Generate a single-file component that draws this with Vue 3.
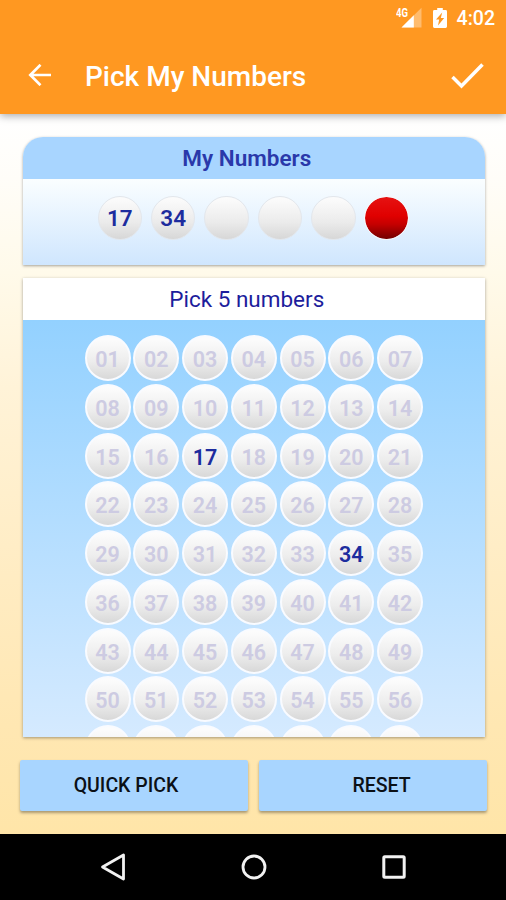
<script setup>
const picked = [17, 34]
const slots = ['17', '34', '', '', '']
const numbers = Array.from({ length: 56 }, (_, i) => i + 1)
const label = (n) => String(n).padStart(2, '0')
</script>

<template>
  <div class="screen">
    <header class="top">
      <div class="status">
        <svg class="signal" width="27" height="22" viewBox="0 0 27 22">
          <text x="0" y="10" class="net" textLength="12" lengthAdjust="spacingAndGlyphs">4G</text>
          <path d="M25.5 .8V20.500H5.5z" fill="#fff" opacity=".35" />
          <path d="M17.8 8.300V20.500H5.5z" fill="#fff" />
        </svg>
        <svg class="battery" width="14" height="20" viewBox="0 0 14 20">
          <path fill="#fff" d="M4.2 0h5.6v2H12.600q1.400 0 1.400 1.400V18.600q0 1.400-1.400 1.400H1.400Q0 20 0 18.600V3.400Q0 2 1.400 2H4.200z" />
          <path fill="#ff9821" d="M9.200 4.500L3 11.600H6.200L5 17.500L11.200 10H7.800z" />
        </svg>
        <span class="clock">4:02</span>
      </div>
      <div class="bar">
        <svg class="back" width="24" height="22" viewBox="0 0 24 22" fill="none" stroke="#fff" stroke-width="2.700">
          <path d="M23 11H2M12.500 .8L2.300 11L12.500 21.200" />
        </svg>
        <h1>Pick My Numbers</h1>
        <svg class="check" width="33" height="26" viewBox="0 0 33 26" fill="none" stroke="#fff" stroke-width="3.500">
          <path d="M1.500 14L10.500 23L31.500 1.500" />
        </svg>
      </div>
    </header>

    <main>
      <section class="card mine">
        <h2>My Numbers</h2>
        <div class="slots">
          <span v-for="(s, i) in slots" :key="i" class="slot">{{ s }}</span>
          <span class="slot red"></span>
        </div>
      </section>

      <section class="card picker">
        <h3>Pick 5 numbers</h3>
        <div class="field">
          <div class="grid">
            <span v-for="n in numbers" :key="n" class="ball" :class="{ on: picked.includes(n) }">{{ label(n) }}</span>
            <span v-for="n in 7" :key="'next' + n" class="ball"></span>
          </div>
        </div>
      </section>

      <div class="actions">
        <button class="quick">QUICK PICK</button>
        <button class="reset">RESET</button>
      </div>
    </main>

    <nav>
      <svg width="26" height="28" viewBox="0 0 26 28" fill="none" stroke="#f2f2f2" stroke-width="2.800" stroke-linejoin="round">
        <path d="M23.500 2V26L2.500 14z" />
      </svg>
      <svg width="26" height="26" viewBox="0 0 26 26" fill="none" stroke="#f2f2f2" stroke-width="2.800">
        <circle cx="13" cy="13" r="11" />
      </svg>
      <svg width="26" height="26" viewBox="0 0 26 26" fill="none" stroke="#f2f2f2" stroke-width="3" stroke-linejoin="round">
        <rect x="2.800" y="2.800" width="20.400" height="20.400" rx="1" />
      </svg>
    </nav>
  </div>
</template>

<style>
body {
  margin: 0;
  overflow: hidden;
}
</style>

<style scoped>
.screen {
  width: 506px;
  height: 900px;
  display: flex;
  flex-direction: column;
  overflow: hidden;
  font-family: Roboto, "Liberation Sans", sans-serif;
  background: #000;
}
.top {
  height: 114px;
  flex: none;
  background: #ff9821;
  color: #fff;
  box-shadow: 0 2px 8px rgba(0, 0, 0, 0.34);
  z-index: 1;
}
.status {
  height: 38px;
  display: flex;
  align-items: center;
  justify-content: flex-end;
  padding-right: 11px;
  box-sizing: border-box;
}
.net {
  font-size: 12px;
  font-weight: 700;
  fill: #fff;
}
.signal {
  margin-top: -3px;
}
.battery {
  margin: -2px 10px 0 10px;
}
.clock {
  font-size: 19.5px;
  font-weight: 500;
  line-height: 40px;
}
.bar {
  height: 76px;
  display: flex;
  align-items: center;
  padding: 0 22px 0 28px;
}
.back {
  margin-top: -2px;
}
h1 {
  margin: 2px 0 0 33px;
  flex: 1;
  font-size: 28px;
  font-weight: 500;
  line-height: 76px;
}
.check {
  margin-top: 0;
}
main {
  height: 719.500px;
  flex: none;
  box-sizing: border-box;
  padding: 23px 18px 0 20px;
  background: linear-gradient(#fff 0%, #fffdf8 9%, #fffaea 22%, #fff3d8 38%, #ffedc6 60%, #ffe7b2 85%, #ffe5a8 100%);
}
.card {
  margin: 0 3.500px 0 3px;
  box-shadow: 0 1px 3px rgba(0, 0, 0, 0.36);
}
.mine {
  height: 127.500px;
  border-radius: 20px 20px 0 0;
  overflow: hidden;
}
h2,
h3 {
  margin: 0;
  text-align: center;
}
h2 {
  height: 41.500px;
  line-height: 43px;
  font-size: 22.500px;
  font-weight: 600;
  padding-right: 14px;
  background: #a8d5ff;
  color: #2a38aa;
}
.slots {
  height: 86px;
  box-sizing: border-box;
  padding: 17px 0 0 74.500px;
  display: flex;
  gap: 8.900px;
  background: linear-gradient(#fafeff, #cfe6fe);
}
.slot {
  width: 44.500px;
  height: 44.500px;
  box-sizing: border-box;
  border-radius: 50%;
  border: 1px solid #e3e7ec;
  background: linear-gradient(#fbfbfb 5%, #ebebeb 60%, #d7d7d7 100%);
  color: #1d2c9e;
  font-size: 22.500px;
  font-weight: 600;
  line-height: 43px;
  text-align: center;
}
.slot.red {
  border: 1.500px solid #f7f8fb;
  background: linear-gradient(#e61212, #e00000 45%, #c50000 65%, #730000 100%);
  background-clip: padding-box;
}
.picker {
  margin-top: 13.500px;
  height: 459px;
}
h3 {
  height: 42px;
  line-height: 43px;
  font-size: 22.500px;
  font-weight: 400;
  padding-right: 14px;
  background: #fff;
  color: #1d1d9c;
}
.field {
  height: 417px;
  overflow: hidden;
  background: linear-gradient(#93d1ff, #d5eaff);
}
.grid {
  display: grid;
  grid-template-columns: repeat(7, 46px);
  grid-auto-rows: 46px;
  gap: 2.750px;
  padding: 15px 0 0 61.500px;
}
.ball {
  box-sizing: border-box;
  border-radius: 50%;
  border: 2px solid #f9fbff;
  background: linear-gradient(#fcfcfc 5%, #ededed 58%, #d8d8d8 100%);
  color: #cdcbe2;
  font-size: 21.500px;
  font-weight: 600;
  line-height: 45px;
  text-align: center;
}
.ball.on {
  color: #1d2c9e;
}
.actions {
  margin-top: 22.500px;
  display: flex;
  gap: 11px;
}
button {
  width: 228px;
  height: 51px;
  border: 0;
  border-radius: 2px;
  background: #a8d5ff;
  color: #0b1016;
  font: 500 19.500px/51px Roboto, "Liberation Sans", sans-serif;
  box-shadow: 0 2px 3px rgba(0, 0, 0, 0.34);
}
.quick {
  padding: 0 16px 0 0;
}
.reset {
  padding: 0 0 0 17px;
}
nav {
  height: 66px;
  display: flex;
  align-items: center;
  justify-content: space-between;
  padding: 0 99px 0 100px;
  background: #000;
}
</style>
